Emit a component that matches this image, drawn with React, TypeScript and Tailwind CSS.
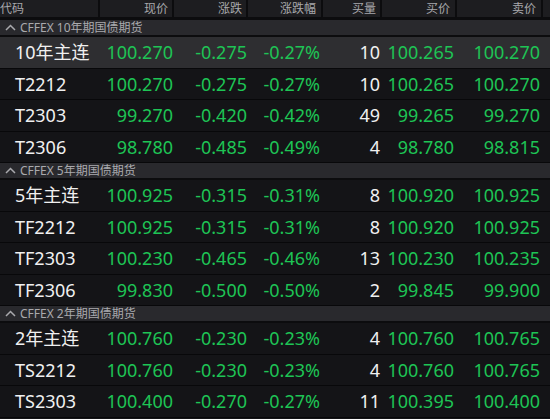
import React from 'react';

type Row = {
  code: string;
  price: string;
  change: string;
  pct: string;
  bidVol: string;
  bid: string;
  ask: string;
  active?: boolean;
};

const groups: { title: string; rows: Row[] }[] = [
  {
    title: 'CFFEX 10年期国债期货',
    rows: [
      { code: '10年主连', price: '100.270', change: '-0.275', pct: '-0.27%', bidVol: '10', bid: '100.265', ask: '100.270', active: true },
      { code: 'T2212', price: '100.270', change: '-0.275', pct: '-0.27%', bidVol: '10', bid: '100.265', ask: '100.270' },
      { code: 'T2303', price: '99.270', change: '-0.420', pct: '-0.42%', bidVol: '49', bid: '99.265', ask: '99.270' },
      { code: 'T2306', price: '98.780', change: '-0.485', pct: '-0.49%', bidVol: '4', bid: '98.780', ask: '98.815' },
    ],
  },
  {
    title: 'CFFEX 5年期国债期货',
    rows: [
      { code: '5年主连', price: '100.925', change: '-0.315', pct: '-0.31%', bidVol: '8', bid: '100.920', ask: '100.925' },
      { code: 'TF2212', price: '100.925', change: '-0.315', pct: '-0.31%', bidVol: '8', bid: '100.920', ask: '100.925' },
      { code: 'TF2303', price: '100.230', change: '-0.465', pct: '-0.46%', bidVol: '13', bid: '100.230', ask: '100.235' },
      { code: 'TF2306', price: '99.830', change: '-0.500', pct: '-0.50%', bidVol: '2', bid: '99.845', ask: '99.900' },
    ],
  },
  {
    title: 'CFFEX 2年期国债期货',
    rows: [
      { code: '2年主连', price: '100.760', change: '-0.230', pct: '-0.23%', bidVol: '4', bid: '100.760', ask: '100.765' },
      { code: 'TS2212', price: '100.760', change: '-0.230', pct: '-0.23%', bidVol: '4', bid: '100.760', ask: '100.765' },
      { code: 'TS2303', price: '100.400', change: '-0.270', pct: '-0.27%', bidVol: '11', bid: '100.395', ask: '100.400' },
    ],
  },
];

const headers = [
  { label: '代码', w: 'w-[100px]', align: 'justify-start pl-0' },
  { label: '现价', w: 'w-[74px]', align: 'justify-end pr-[4px]' },
  { label: '涨跌', w: 'w-[74px]', align: 'justify-end pr-[4px]' },
  { label: '涨跌幅', w: 'w-[75px]', align: 'justify-end pr-[5px]' },
  { label: '买量', w: 'w-[59px]', align: 'justify-end pr-[4px]' },
  { label: '买价', w: 'w-[75px]', align: 'justify-end pr-[5px]' },
  { label: '卖价', w: 'w-[86px]', align: 'justify-end pr-[5px]' },
];

const font = { fontFamily: '"Noto Sans", "Noto Sans CJK SC", sans-serif' };

function Caret() {
  return (
    <svg width="11" height="7" viewBox="0 0 11 7" className="mr-[4px]">
      <path d="M1 6 L5.5 1.5 L10 6" fill="none" stroke="#a9a9ad" strokeWidth="1.5" />
    </svg>
  );
}

export default function App() {
  return (
    <div className="w-[550px] h-[419px] overflow-hidden bg-[#141417]" style={font}>
      {/* header */}
      <div className="flex h-[20px] bg-[#1d1d20] border-b-[3px] border-[#0c0c0e] text-[12px] text-[#a8a8ac]">
        {headers.map((h) => (
          <div
            key={h.label}
            className={`${h.w} ${h.align} flex items-center border-r-2 border-[#0c0c0e] leading-none`}
          >
            {h.label}
          </div>
        ))}
        <div className="flex-1" />
      </div>

      {groups.map((g) => (
        <div key={g.title}>
          <div className="flex items-center h-[17px] bg-[#29292d] border-b-[2px] border-[#0c0c0e] pl-[5px] text-[12px] text-[#a9a9ad] leading-none">
            <Caret />
            {g.title}
          </div>
          {g.rows.map((r) => (
            <div
              key={r.code}
              className={`flex items-center h-[31.5px] border-b border-[#08080a] text-[18px] leading-none ${
                r.active ? 'bg-[#2e2e31]' : 'bg-[#141417]'
              }`}
            >
              <div className="w-[100px] pl-[15px] text-[#f0f0f0]">{r.code}</div>
              <div className="w-[74px] pr-[1px] text-right text-[#1ec455]">{r.price}</div>
              <div className="w-[74px] pr-[1px] text-right text-[#1ec455]">{r.change}</div>
              <div className="w-[75px] pr-[3px] text-right text-[#1ec455]">{r.pct}</div>
              <div className="w-[59px] pr-[2px] text-right text-[#f0f0f0]">{r.bidVol}</div>
              <div className="w-[75px] pr-[3px] text-right text-[#1ec455]">{r.bid}</div>
              <div className="w-[86px] pr-[3px] text-right text-[#1ec455]">{r.ask}</div>
              <div className="flex-1" />
            </div>
          ))}
        </div>
      ))}
    </div>
  );
}
